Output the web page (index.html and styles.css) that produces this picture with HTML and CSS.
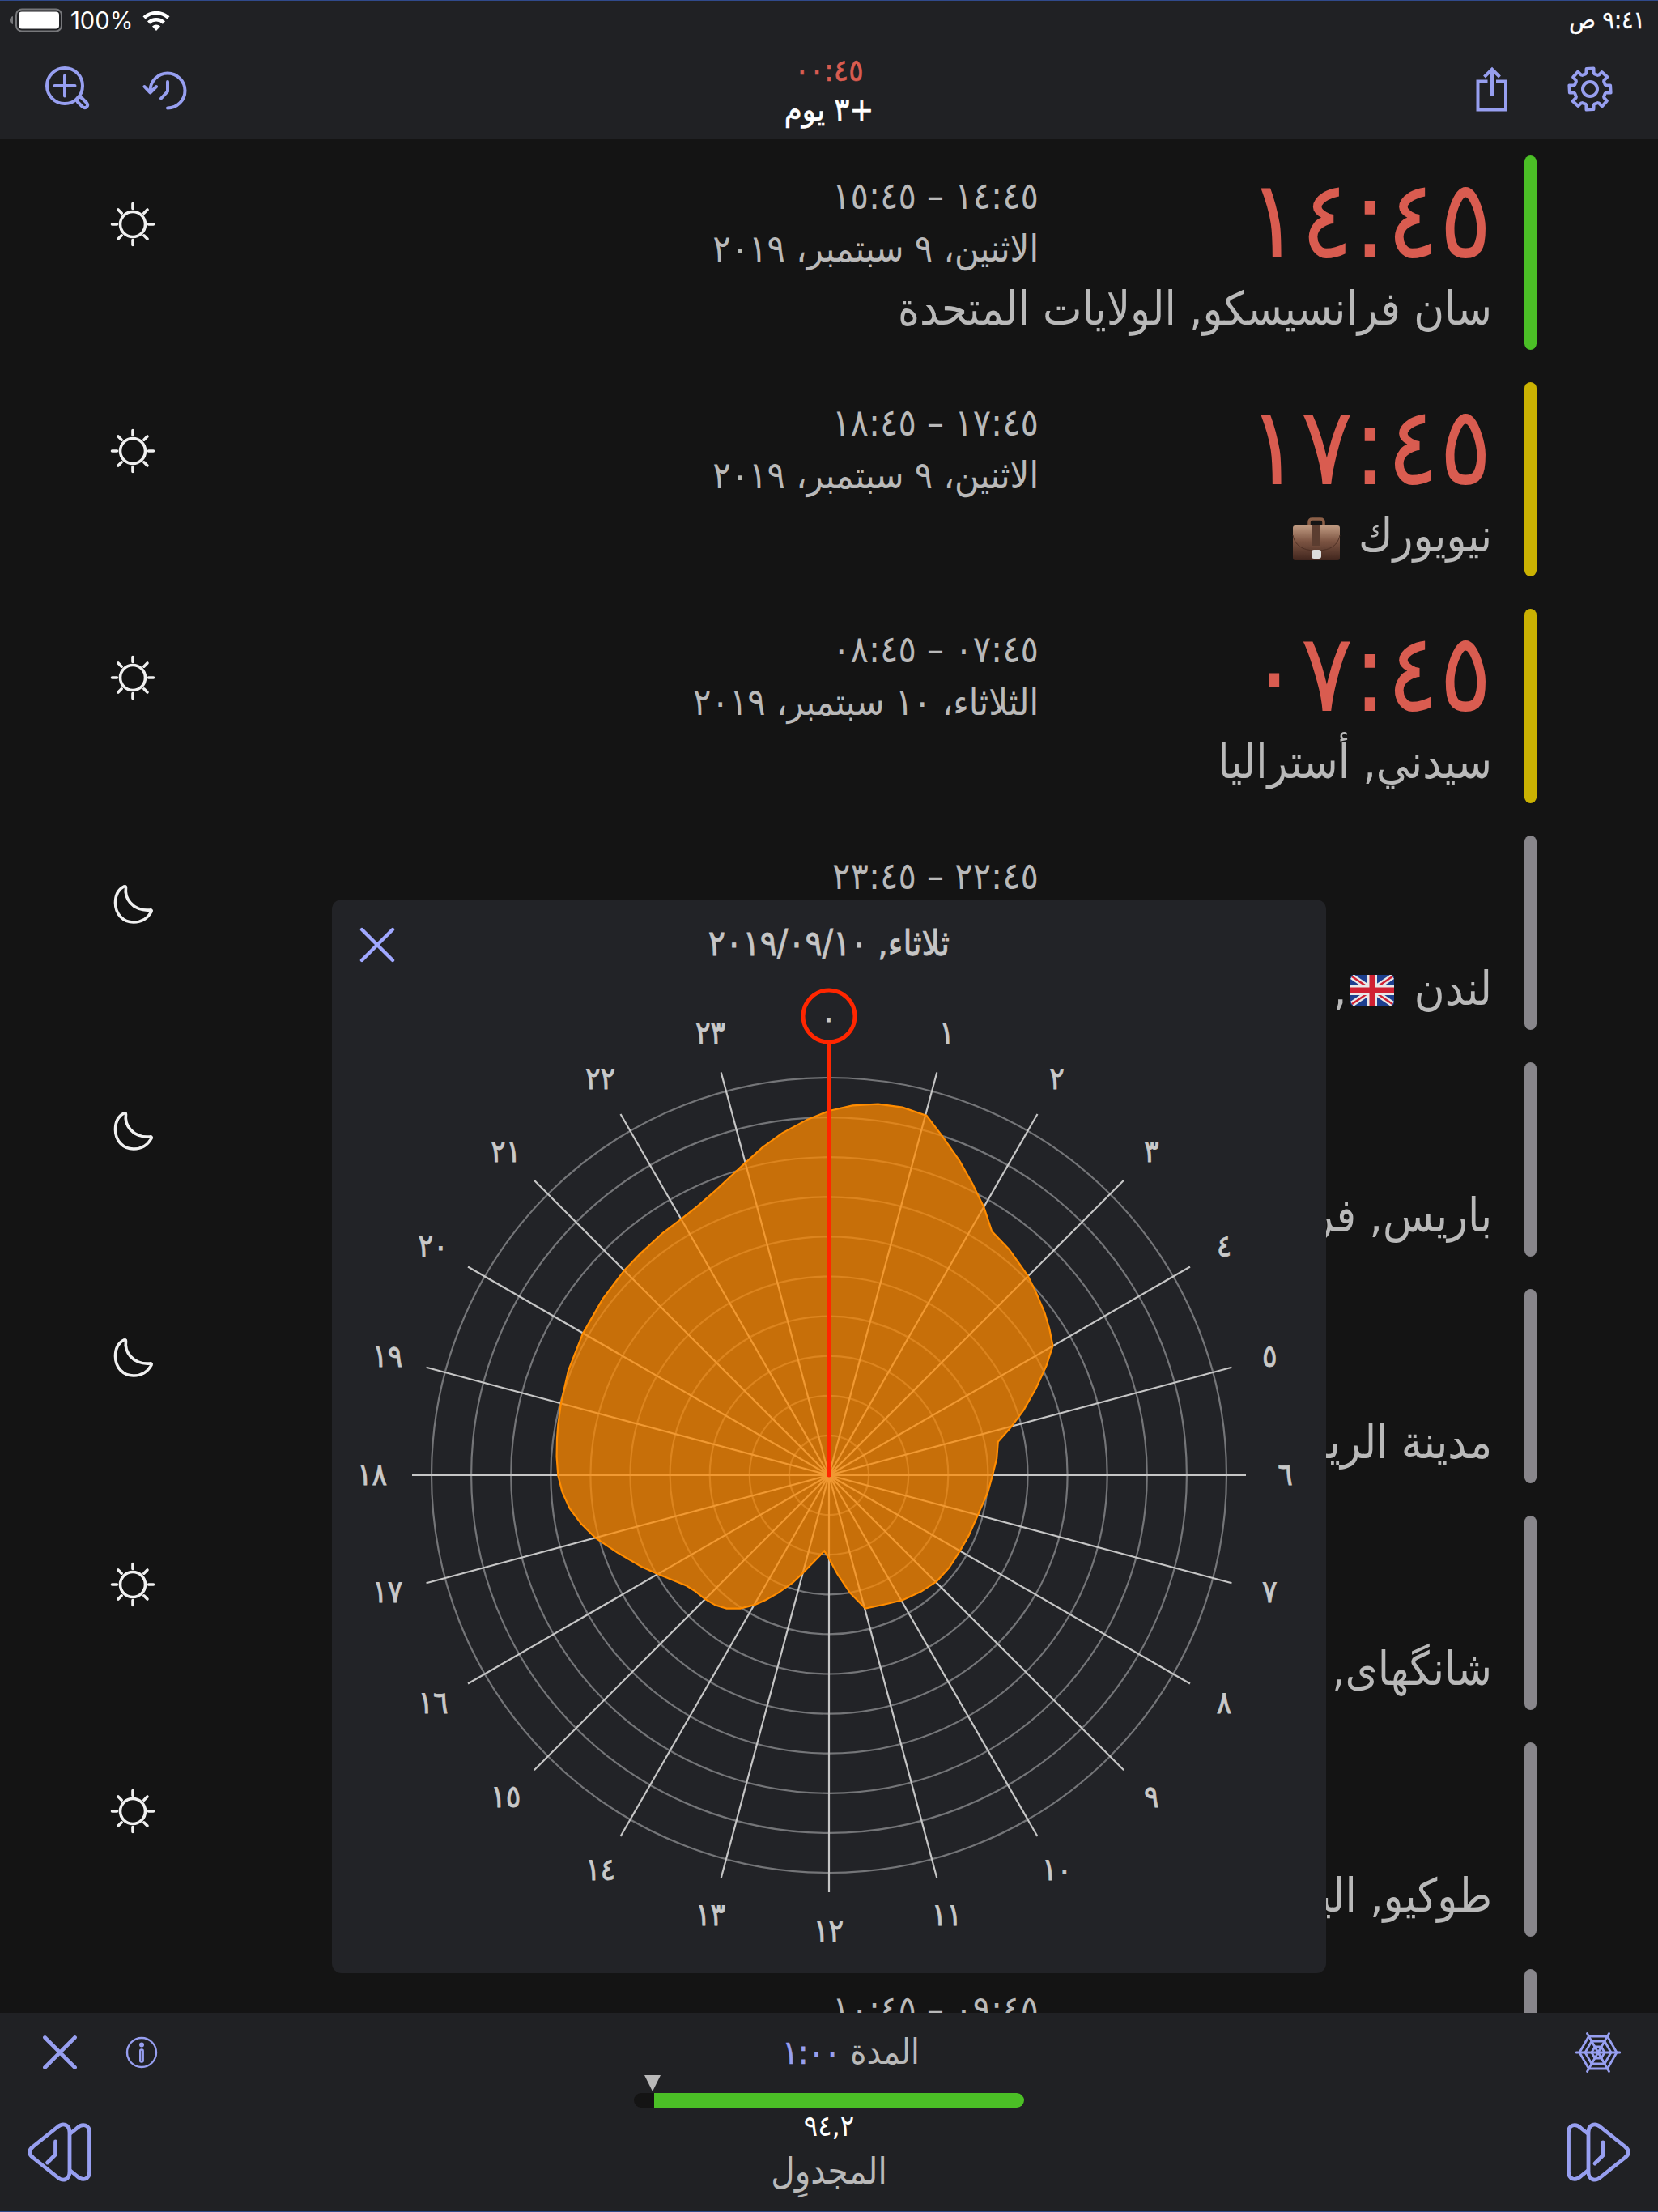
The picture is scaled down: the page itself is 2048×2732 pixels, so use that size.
FILE: index.html
```
<!DOCTYPE html>
<html lang="ar" dir="rtl">
<head>
    <meta charset="UTF-8">
    <meta name="viewport" content="width=device-width, initial-scale=1.0">
    <title>الساعة العالمية</title>
    <link rel="stylesheet" href="styles.css">
</head>
<body>

    <!-- Iconos compartidos -->
    <svg class="sprite" aria-hidden="true">
        <symbol id="sun" viewBox="0 0 56 56">
            <circle cx="28" cy="28" r="15.5"/>
            <path d="M28 2.5v6M28 47.500v6M2.500 28h6M47.500 28h6M10 10l4.200 4.200M41.800 41.800l4.200 4.200M10 46l4.200-4.200M41.800 14.200l4.200-4.200"/>
        </symbol>
        <symbol id="moon" viewBox="0 0 56 56">
            <path d="M17 6C9 10 6.500 18 6.500 26C6.500 40 16 50 29 50C38 50 46 46 51 37Q52 34.500 49 35C39 36 30 32 25 26C20 20 18.500 14 19.500 7.500Q19.500 5 17 6Z"/>
        </symbol>
        <symbol id="skip" viewBox="0 0 80 76">
            <path d="M27 15L19 8.500C12 2 3.500 4 3.500 14V62C3.500 72 12 74 19 67.500L27 61"/>
            <path d="M28 14C28 4 36 1 43 7L73 31C79 35.500 79 40.500 73 45L43 69C36 75 28 72 28 62Z"/>
        </symbol>
    </svg>

    <header class="topbar">
        <div class="status">
            <span class="clock">٩:٤١ ص</span>
            <div class="power">
                <svg class="wifi" viewBox="0 0 34 25">
                    <path d="M17 25l-5-5.500a7.500 7.500 0 0 1 10 0z" fill="#fff"/>
                    <path d="M7.500 15a14 14 0 0 1 19 0M2 8.800a22 22 0 0 1 30 0" fill="none" stroke="#fff" stroke-width="4.500"/>
                </svg>
                <span class="percent">100%</span>
                <svg class="battery" viewBox="0 0 66 30">
                    <path d="M4 10v10q-4-1-4-5t4-5z" fill="#77787b"/>
                    <rect x="8" y="1.500" width="56" height="27" rx="7" fill="none" stroke="#77787b" stroke-width="2"/>
                    <rect x="11" y="4.500" width="50" height="21" rx="4" fill="#fff"/>
                </svg>
            </div>
        </div>
        <nav class="tools">
            <div class="tool-group">
                <svg class="icon gear" viewBox="0 0 56 56">
                    <path id="gearPath" d=""/>
                    <circle cx="28" cy="28" r="9"/>
                </svg>
                <svg class="icon share" viewBox="0 0 40 56">
                    <path d="M14.500 18.500H2.500V53.500H37V18.500H25M20 36V4M10.500 13L20 3.500L29.500 13"/>
                </svg>
            </div>
            <div class="offset">
                <span class="offset-time">٠٠:٤٥</span>
                <span class="offset-day">+٣ يوم</span>
            </div>
            <div class="tool-group">
                <svg class="icon history" viewBox="0 0 56 50">
                    <path d="M9.500 25A21.500 21.500 0 1 1 31 46.500M2.500 20L9.500 27.500L17 20M31 14v12l-8 8.500"/>
                </svg>
                <svg class="icon search" viewBox="0 0 56 56">
                    <circle cx="24" cy="24" r="22"/>
                    <path d="M24 11.500v25M11.500 24h25M40 44l6 6c4 3 8-1 5-5l-6-6c-4-3-8 1-5 5z"/>
                </svg>
            </div>
        </nav>
    </header>

    <main class="cities">
        <section class="city">
            <div class="bar good"></div>
            <div class="time">١٤:٤٥</div>
            <div class="range"><p>١٤:٤٥ – ١٥:٤٥</p><p>الاثنين، ٩ سبتمبر، ٢٠١٩</p></div>
            <svg class="sky"><use href="#sun"/></svg>
            <div class="name">سان فرانسيسكو, الولايات المتحدة</div>
        </section>
        <section class="city">
            <div class="bar fair"></div>
            <div class="time">١٧:٤٥</div>
            <div class="range"><p>١٧:٤٥ – ١٨:٤٥</p><p>الاثنين، ٩ سبتمبر، ٢٠١٩</p></div>
            <svg class="sky"><use href="#sun"/></svg>
            <div class="name">نيويورك
                <svg class="bag" viewBox="0 0 60 54">
                    <defs>
                        <linearGradient id="leather" x1="0" y1="0" x2="0" y2="1">
                            <stop offset="0" stop-color="#c09b82"/>
                            <stop offset=".45" stop-color="#7d5543"/>
                            <stop offset="1" stop-color="#40251d"/>
                        </linearGradient>
                    </defs>
                    <path d="M21 11V6q0-4 4-4h10q4 0 4 4v5" fill="none" stroke="#8c6048" stroke-width="3.500"/>
                    <rect x="1" y="10" width="58" height="43" rx="3" fill="url(#leather)"/>
                    <path d="M1 22C4 37 16 41 30 41S56 37 59 22" fill="none" stroke="#4d2f24"/>
                    <rect x="25" y="10" width="10" height="25" fill="#5b3d30"/>
                    <rect x="24" y="40" width="12" height="11" rx="3" fill="#dcdcdc"/>
                </svg>
            </div>
        </section>
        <section class="city">
            <div class="bar fair"></div>
            <div class="time">٠٧:٤٥</div>
            <div class="range"><p>٠٧:٤٥ – ٠٨:٤٥</p><p>الثلاثاء، ١٠ سبتمبر، ٢٠١٩</p></div>
            <svg class="sky"><use href="#sun"/></svg>
            <div class="name">سيدني, أستراليا</div>
        </section>
        <section class="city">
            <div class="bar"></div>
            <div class="range"><p>٢٢:٤٥ – ٢٣:٤٥</p></div>
            <svg class="sky"><use href="#moon"/></svg>
            <div class="name">لندن
                <svg class="flag" viewBox="0 0 54 38">
                    <rect width="54" height="38" rx="4" fill="#1d3f8f"/>
                    <path d="M2 2L52 36M52 2L2 36" stroke="#e8e8e8" stroke-width="7"/>
                    <path d="M2 2L52 36M52 2L2 36" stroke="#d02032" stroke-width="2.500"/>
                    <path d="M27 0V38M0 19H54" stroke="#e8e8e8" stroke-width="12"/>
                    <path d="M27 0V38M0 19H54" stroke="#d02032" stroke-width="7"/>
                </svg>, المملكة
            </div>
        </section>
        <section class="city">
            <div class="bar"></div>
            <svg class="sky"><use href="#moon"/></svg>
            <div class="name">باريس, فرنسا</div>
        </section>
        <section class="city">
            <div class="bar"></div>
            <svg class="sky"><use href="#moon"/></svg>
            <div class="name">مدينة الرياض</div>
        </section>
        <section class="city">
            <div class="bar"></div>
            <svg class="sky"><use href="#sun"/></svg>
            <div class="name">شانگهای, الصين</div>
        </section>
        <section class="city">
            <div class="bar"></div>
            <svg class="sky"><use href="#sun"/></svg>
            <div class="name">طوكيو, اليابان</div>
        </section>
        <section class="city">
            <div class="bar"></div>
            <div class="range"><p>٠٩:٤٥ – ١٠:٤٥</p></div>
        </section>
    </main>

    <div class="panel">
        <h2 class="panel-title">ثلاثاء, ٢٠١٩/٠٩/١٠</h2>
        <svg class="icon panel-close" viewBox="0 0 44 44"><path d="M3 3l38 38M41 3l-38 38"/></svg>
        <svg class="chart" viewBox="-614 -711 1228 1326">
            <g id="rings" class="rings"></g>
            <g id="spokes" class="spokes"></g>
            <g transform="translate(-1024 -1822)">
                <polygon class="area" points="1024,1372 1053,1365.4 1084.7,1363.7 1114.8,1367.7 1144.6,1378 1164.1,1403.4 1185.2,1433.7 1201.2,1461.9 1215.5,1491.3 1225.2,1520.8 1246.6,1543.1 1269.4,1575.3 1279,1594.5 1290.4,1621.3 1296.3,1641.3 1300.5,1662.3 1292.5,1686.9 1279.5,1715 1264.3,1741.8 1248.3,1763.2 1232.8,1780.7 1231.2,1801.3 1226,1822.3 1220.3,1842.9 1208.2,1870.5 1196.7,1896.4 1185.7,1915.6 1172.5,1936.2 1157,1953.1 1138,1965.6 1115,1976.3 1092,1981.7 1069,1986.6 1050,1967.4 1034.5,1944.2 1024,1925 1018.2,1915.6 990.8,1943.8 979,1954.9 961.2,1967.4 946,1976 932.1,1982.1 914.3,1986.6 897.4,1986.6 883.7,1982.6 870.4,1974.6 859.2,1965.6 848,1958.5 810.7,1943.3 792.9,1935.3 762.2,1917.4 735.2,1899.1 717.9,1882.1 703.6,1862.9 694.4,1842.4 689.3,1822.3 687.6,1799.1 688,1776.8 689.3,1759.6 692.9,1733.3 702,1692.7 719.9,1647.1 744.4,1604.3 771.4,1568.6 790.3,1548.9 818.4,1523 840.8,1506.1 861.7,1489.6 884.7,1469.5 920.4,1436.4 941.8,1417.2 966.3,1399.4 996.9,1382.9"/>
            </g>
            <path class="hand" d="M0 0V-535"/>
            <circle class="hand" cx="0" cy="-567" r="32"/>
            <g id="hours" class="hours"></g>
        </svg>
    </div>

    <footer class="bottombar">
        <div class="corner start">
            <svg class="icon web" viewBox="0 0 56 50">
                <path d="M1 25h54M14.500 1.500l27 47M41.500 1.500l-27 47"/>
                <path d="M5 25L16.500 5h23L51 25L39.500 45h-23zM12 25l8-14h16l8 14l-8 14h-16zM20 25l4-7h8l4 7l-4 7h-8z"/>
            </svg>
            <svg class="icon skip" viewBox="0 0 80 76"><use href="#skip"/><path d="M46 26v16l-10 10"/></svg>
        </div>
        <div class="duration">
            <div class="duration-line"><span>المدة</span> <b>١:٠٠</b></div>
            <div class="marker"></div>
            <div class="meter"><div class="meter-fill"></div></div>
            <div class="score">٩٤,٢</div>
            <div class="planner">المجدوِل</div>
        </div>
        <div class="corner end">
            <div class="small-icons">
                <svg class="icon info" viewBox="0 0 40 40">
                    <circle cx="20" cy="20" r="18"/>
                    <circle class="dot" cx="20" cy="10.500" r="3"/>
                    <rect x="18.200" y="16.500" width="3.500" height="15" rx="1.500"/>
                </svg>
                <svg class="icon close" viewBox="0 0 44 44"><path d="M3.500 3.500l37 37M40.500 3.500l-37 37"/></svg>
            </div>
            <svg class="icon skip" viewBox="0 0 80 76"><use href="#skip" transform="matrix(-1 0 0 1 80 0)"/><path d="M34.500 25v16l-10 10"/></svg>
        </div>
    </footer>

    <script src="script.js"></script>
</body>
</html>
```
FILE: styles.css
```
* {
    box-sizing: border-box;
}

body {
    margin: 0;
    width: 2048px;
    height: 2732px;
    overflow: hidden;
    position: relative;
    display: flex;
    flex-direction: column;
    background: #141414;
    color: #b9b9b9;
    font-family: "DejaVu Sans Condensed", "DejaVu Sans", sans-serif;
}

p, h2 {
    margin: 0;
    font-weight: normal;
}

svg {
    display: block;
    flex: none;
}

.sprite {
    position: absolute;
    width: 0;
    height: 0;
}

.icon {
    fill: none;
    stroke: #979ff0;
    stroke-width: 4;
    stroke-linecap: round;
    stroke-linejoin: round;
}

/* Barra superior */
.topbar {
    flex: none;
    height: 172px;
    background: #202124;
    border-top: 1px solid #304a8c;
    color: #fff;
}

.status {
    height: 48px;
    padding: 0 16px 0 12px;
    display: flex;
    justify-content: space-between;
    align-items: center;
}

.clock {
    font-size: 30px;
    line-height: 30px;
    -webkit-text-stroke: 0.4px;
}

.power {
    display: flex;
    align-items: center;
}

.wifi {
    width: 34px;
    height: 25px;
    margin-left: 12px;
}

.percent {
    font: 29.2px Inter, sans-serif;
    margin-left: 9px;
}

.battery {
    width: 66px;
    height: 30px;
}

.tools {
    height: 123px;
    padding: 0 56px 0 56px;
    display: flex;
    justify-content: space-between;
}

.tool-group {
    width: 330px;
    display: flex;
    align-items: flex-start;
    padding-top: 33px;
}

.tool-group:last-child {
    justify-content: flex-end;
}

.gear {
    width: 56px;
    height: 56px;
}

.share {
    width: 40px;
    height: 56px;
    margin-right: 73px;
    stroke-linecap: butt;
    stroke-linejoin: miter;
}

.history {
    width: 56px;
    height: 50px;
    margin-left: 64px;
    margin-top: 5px;
}

.search {
    width: 56px;
    height: 56px;
}

.offset {
    display: flex;
    flex-direction: column;
    align-items: center;
    padding-top: 15px;
    white-space: nowrap;
    -webkit-text-stroke: 0.6px;
}

.offset-time {
    color: #d95c50;
    font-size: 38px;
    line-height: 46px;
}

.offset-day {
    font-size: 39.5px;
    line-height: 50px;
}

/* Lista de ciudades */
.cities {
    flex: 1;
    min-height: 0;
    overflow: hidden;
    padding: 20px 150px 0 136px;
}

.city {
    height: 240px;
    margin-bottom: 40px;
    display: grid;
    grid-template-columns: 15px 520px 1fr 56px;
    grid-template-rows: 155px 85px;
    column-gap: 40px;
}

.bar {
    grid-row: 1 / 3;
    border-radius: 8px;
    background: #88868b;
}

.bar.good {
    background: #4bbf26;
}

.bar.fair {
    background: #cbb202;
}

.time {
    grid-area: 1 / 2;
    color: #d95c50;
    font-size: 135px;
    line-height: 150px;
    padding-top: 5px;
    white-space: nowrap;
}

.range {
    grid-area: 1 / 3;
    font-size: 46.4px;
    line-height: 65px;
    padding-top: 18px;
    white-space: nowrap;
}

.sky {
    grid-area: 1 / 4;
    width: 56px;
    height: 56px;
    margin-top: 57px;
    fill: none;
    stroke: #f0f0f0;
    stroke-width: 3.6;
    stroke-linecap: round;
    stroke-linejoin: round;
}

.name {
    grid-area: 2 / 2 / 3 / 4;
    font-size: 57.3px;
    line-height: 70px;
    white-space: nowrap;
}

.bag, .flag {
    display: inline-block;
}

.bag {
    width: 60px;
    height: 54px;
    margin-right: 6px;
    vertical-align: -12px;
}

.flag {
    width: 54px;
    height: 38px;
    margin-right: 8px;
    margin-left: 5px;
    vertical-align: -1px;
}

/* Gráfico radial */
.panel {
    position: absolute;
    left: 410px;
    top: 1111px;
    width: 1228px;
    height: 1326px;
    background: #222327;
    border-radius: 12px;
}

.panel-title {
    position: absolute;
    top: 24px;
    left: 0;
    right: 0;
    text-align: center;
    font-size: 44px;
    line-height: 60px;
    color: #c6c6c6;
    -webkit-text-stroke: 0.8px;
}

.panel-close {
    position: absolute;
    left: 34px;
    top: 34px;
    width: 44px;
    height: 44px;
    stroke: #a0a8ff;
    stroke-width: 4.4;
}

.chart {
    width: 1228px;
    height: 1326px;
}

.rings {
    fill: none;
    stroke: #747578;
    stroke-width: 2.2;
}

.spokes {
    stroke: #c6c6c6;
    stroke-width: 2.2;
}

.area {
    fill: rgba(255, 138, 0, 0.75);
    stroke: #ff8c00;
    stroke-width: 2.2;
}

.hand {
    fill: none;
    stroke: #ff2600;
    stroke-width: 5;
    stroke-linecap: round;
}

.hours {
    fill: #c9c9c9;
    stroke: #c9c9c9;
    stroke-width: 0.8;
    font-size: 38.5px;
    text-anchor: middle;
}

/* Barra inferior */
.bottombar {
    flex: none;
    height: 246px;
    background: #202124;
    border-bottom: 1px solid #304a8c;
    display: flex;
    justify-content: space-between;
    padding: 0 34px;
}

.corner {
    width: 200px;
    display: flex;
    flex-direction: column;
    justify-content: space-between;
    padding: 24px 0 35px;
}

.corner.end {
    align-items: flex-end;
}

.small-icons {
    width: 161px;
    display: flex;
    justify-content: space-between;
    align-items: center;
    padding-left: 18px;
}

.web {
    width: 56px;
    height: 50px;
    margin-right: 12px;
    stroke-width: 2.8;
}

.skip {
    width: 80px;
    height: 76px;
    stroke-width: 4.8;
}

.info {
    width: 40px;
    height: 40px;
    stroke-width: 2.4;
}

.info .dot {
    fill: #979ff0;
    stroke: none;
}

.close {
    width: 44px;
    height: 50px;
    stroke-width: 4.8;
}

.duration {
    width: 482px;
    display: flex;
    flex-direction: column;
    align-items: center;
}

.duration-line {
    height: 50px;
    font-size: 43px;
    line-height: 50px;
    margin-top: 23px;
    padding-left: 54px;
}

.duration-line b {
    font-size: 41px;
    font-weight: normal;
    color: #979ff0;
    -webkit-text-stroke: 0.6px;
}

.marker {
    align-self: flex-end;
    margin: 4px 0 2px 13px;
    border: 10px solid transparent;
    border-top: 20px solid #b9b9b9;
    border-bottom: 0;
}

.meter {
    width: 482px;
    height: 18px;
    border-radius: 9px;
    background: #141414;
    overflow: hidden;
}

.meter-fill {
    width: 94.8%;
    height: 18px;
    background: #4bbf26;
}

.score {
    color: #fff;
    font-size: 36px;
    line-height: 46px;
}

.planner {
    font-size: 45px;
    line-height: 60px;
    margin-top: 3px;
}
```
FILE: script.js
```
const NS = 'http://www.w3.org/2000/svg';
const digits = '٠١٢٣٤٥٦٧٨٩';

function add(parent, tag, attrs) {
    const el = document.createElementNS(NS, tag);
    for (const key in attrs) el.setAttribute(key, attrs[key]);
    document.getElementById(parent).appendChild(el);
    return el;
}

// Anillos
for (let i = 1; i <= 10; i++) {
    add('rings', 'circle', { cx: 0, cy: 0, r: i * 49.1 });
}

// Una línea y un número por cada hora
for (let h = 0; h < 24; h++) {
    const a = h * Math.PI / 12;
    const x = Math.sin(a);
    const y = -Math.cos(a);
    add('spokes', 'line', { x1: 0, y1: 0, x2: x * 515, y2: y * 515 });
    const label = add('hours', 'text', { x: x * 564 - 0.5, y: y * 564 + 11.5 });
    label.textContent = String(h).replace(/\d/g, d => digits[d]);
}

// Engranaje de ocho dientes
let gear = '';
for (let i = 0; i < 8; i++) {
    [[19.5, -16], [20.5, -13], [25.5, -10], [26, 10], [20.5, 13], [19.5, 16]].forEach(([r, deg]) => {
        const a = (i * 45 + deg) * Math.PI / 180;
        gear += (gear ? 'L' : 'M') + (28 + r * Math.sin(a)).toFixed(1) + ' ' + (28 - r * Math.cos(a)).toFixed(1);
    });
}
document.getElementById('gearPath').setAttribute('d', gear + 'Z');
```
